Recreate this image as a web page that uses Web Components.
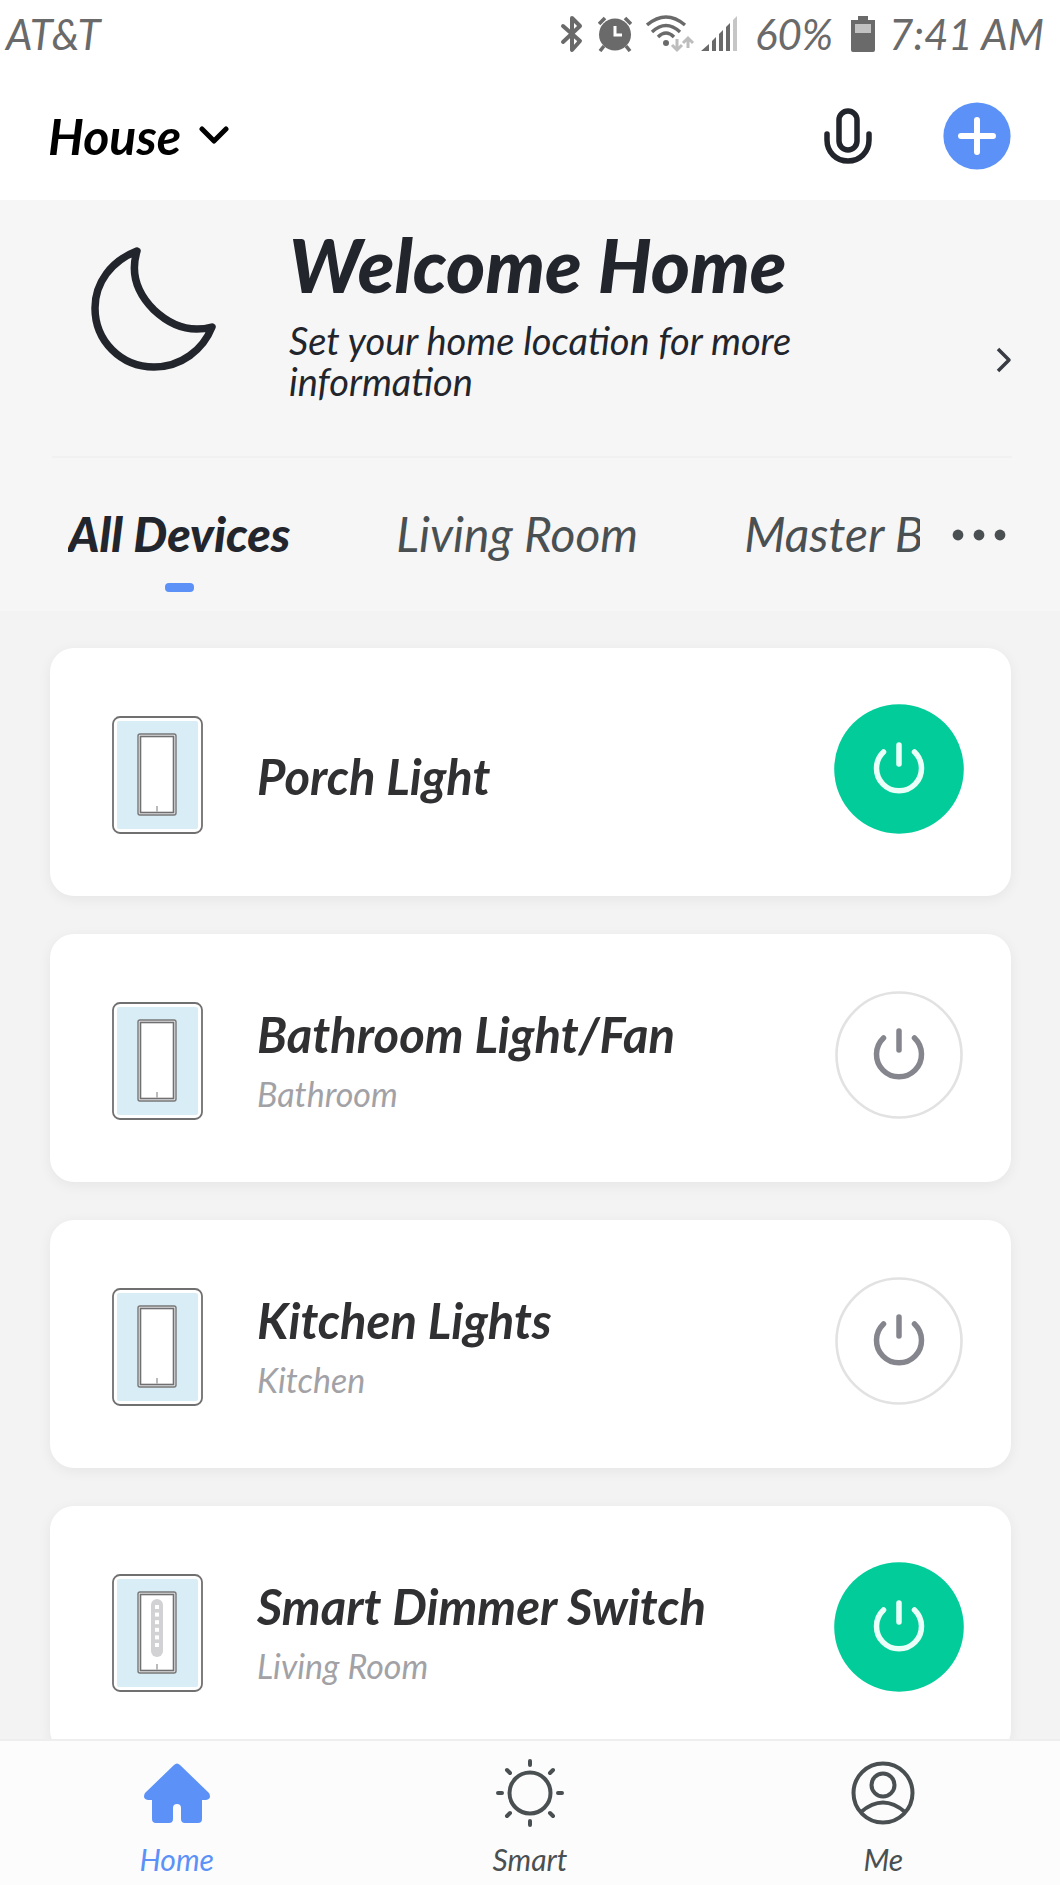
<!DOCTYPE html>
<html lang="en">
<head>
<meta charset="utf-8">
<meta name="viewport" content="width=device-width, initial-scale=1">
<title>House</title>
<style>
  html, body {
    height: 100%;
    margin: 0;
  }
  body {
    font-family: Lato, "Liberation Sans", sans-serif;
    font-style: italic;
    color: #23252d;
    background: #f3f3f3;
    --blue: #5c92f8;
    --ink: #23252d;
    --slate: #4a5052;
  }
</style>
</head>
<body>
<home-app></home-app>

<script>
const RESET = `
  * { box-sizing: border-box; }
  svg { display: block; flex: none; }
  h1, h2, p, ul { margin: 0; padding: 0; font-weight: inherit; }
  button {
    margin: 0;
    padding: 0;
    border: 0;
    background: none;
    font: inherit;
    color: inherit;
    cursor: pointer;
  }
  a { color: inherit; text-decoration: none; }
`;

// Attaches an open shadow root with the shared reset, the element's styles and its markup
function render(el, css, html) {
    el.attachShadow({ mode: 'open' });
    el.shadowRoot.innerHTML = `<style>${RESET}${css}</style>${html}`;
}

class StatusBar extends HTMLElement {
    constructor() {
        super();
        render(this, `
        :host {
          display: flex;
          align-items: center;
          height: 68px;
          padding: 0 16px 0 6px;
          font-size: 42px;
          color: #6a6a6a;
          background: #fff;
        }
        .right, .network {
          display: flex;
          align-items: center;
          gap: 14px;
        }
        .right { margin-left: auto; }
        .network { gap: 6px; }
        ::slotted([slot="level"]) {
          min-width: 86px;
          text-align: center;
        }
        `, `
        <slot></slot>
        <div class="right">
          <svg width="24" height="38" viewBox="0 0 24 38" fill="none" stroke="currentColor" stroke-width="4" stroke-linejoin="round" stroke-linecap="round">
            <path d="M3 11L20 26L12 35V3L20 11L3 27"/>
          </svg>
          <svg width="34" height="36" viewBox="0 0 34 36">
            <circle cx="17" cy="18.500" r="16" fill="currentColor"/>
            <path d="M1 8L7 2M33 8L27 2M6 30L2 35M28 30L32 35" stroke="currentColor" stroke-width="3.600"/>
            <path d="M17 10V19H24" fill="none" stroke="#fff" stroke-width="3"/>
          </svg>
          <div class="network">
            <svg width="49" height="38" viewBox="0 0 49 38">
              <g fill="none" stroke="currentColor" stroke-width="3.400">
                <path d="M1 10Q20 -6 39 10"/>
                <path d="M6 17Q20 4 34 17"/>
                <path d="M12 22Q20 14 28 22"/>
              </g>
              <circle cx="20" cy="28" r="3" fill="currentColor"/>
              <path d="M31 24V34M26 30L31 35L36 30M42 33V23M37 28L42 23L47 28" fill="none" stroke="#bdbdbd" stroke-width="3"/>
            </svg>
            <svg width="36" height="36" viewBox="0 0 36 36" fill="currentColor">
              <path d="M0 35L8 28V35ZM11 25L15 21V35H11ZM18 18L22 14V35H18ZM25 11L29 7V35H25Z"/>
              <path d="M32 4L36 0V35H32Z" fill="#c6c6c6"/>
            </svg>
          </div>
          <slot name="level"></slot>
          <svg width="24" height="36" viewBox="0 0 24 36">
            <path d="M7 0H17V4H24V34Q24 36 22 36H2Q0 36 0 34V4H7Z" fill="currentColor"/>
            <path d="M4 8H20V17H4Z" fill="#c2c2c2"/>
          </svg>
          <slot name="time"></slot>
        </div>`);
    }
}
customElements.define('status-bar', StatusBar);

class HouseHeader extends HTMLElement {
    constructor() {
        super();
        render(this, `
        :host {
          display: flex;
          box-sizing: border-box;
          align-items: center;
          justify-content: space-between;
          height: 132px;
          padding: 4px 49px 0 48px;
          background: #fff;
        }
        .home {
          display: flex;
          align-items: center;
          gap: 18px;
          font-size: 50px;
          line-height: 60px;
          font-weight: 700;
          color: #000;
        }
        .actions {
          display: flex;
          align-items: center;
          gap: 71px;
        }
        `, `
        <button class="home" type="button">
          <slot></slot>
          <svg width="30" height="20" viewBox="0 0 30 20" fill="none" stroke="currentColor" stroke-width="5" stroke-linecap="round" stroke-linejoin="round">
            <path d="M3 3L15 15L27 3"/>
          </svg>
        </button>
        <div class="actions">
          <button type="button" aria-label="Voice control">
            <svg width="48" height="58" viewBox="0 -1 48 58" fill="none" stroke="#23252d" stroke-width="5.500" stroke-linecap="round">
              <rect x="15" y="3" width="18" height="39" rx="9"/>
              <path d="M3 26V32C3 44 12 53 24 53S45 44 45 32V26"/>
            </svg>
          </button>
          <button type="button" aria-label="Add device">
            <svg width="68" height="68" viewBox="0 0 68 68">
              <circle cx="34" cy="34" r="33.600" fill="#5c92f8"/>
              <path d="M34 18V50M18 34H50" stroke="#fff" stroke-width="6" stroke-linecap="round"/>
            </svg>
          </button>
        </div>`);
    }
}
customElements.define('house-header', HouseHeader);

class WelcomeBanner extends HTMLElement {
    constructor() {
        super();
        render(this, `
        :host {
          display: block;
          padding: 0 48px 0 52px;
          background: #f6f6f6;
        }
        a {
          display: flex;
          align-items: center;
          height: 258px;
          padding-left: 39px;
          border-bottom: 2px solid #f1f1f1;
        }
        .moon { margin-bottom: 38px; }
        .text {
          flex: 1;
          padding: 0 72px;
          margin-bottom: 34px;
        }
        h1 {
          font-size: 75px;
          line-height: 88px;
          font-weight: 900;
        }
        p {
          max-width: 560px;
          margin-top: 12px;
          font-size: 38px;
          line-height: 41px;
        }
        .arrow { margin-top: 64px; }
        `, `
        <a href="#location">
          <svg class="moon" width="126" height="126" viewBox="0 0 126 126" fill="none" stroke="#23252d" stroke-width="7.500" stroke-linejoin="round">
            <path d="M46 5C20 15 4 37 4 62C4 95 30 121 63 121C90 121 112 104 121 81C99 87 79 79 63 64C47 48 39 28 46 5Z"/>
          </svg>
          <div class="text">
            <h1><slot></slot></h1>
            <p><slot name="hint"></slot></p>
          </div>
          <svg class="arrow" width="16" height="26" viewBox="0 0 16 26" fill="none" stroke="#3a3c44" stroke-width="3.500" stroke-linejoin="round">
            <path d="M2 2L13 13L2 24"/>
          </svg>
        </a>`);
    }
}
customElements.define('welcome-banner', WelcomeBanner);

class RoomTabs extends HTMLElement {
    constructor() {
        super();
        render(this, `
        :host {
          display: flex;
          height: 153px;
          padding: 0 54px 0 68px;
          background: #f6f6f6;
        }
        .tabs {
          flex: 1;
          display: flex;
          gap: 106px;
          min-width: 0;
          overflow: hidden;
        }
        .more {
          display: flex;
          align-items: center;
          padding-left: 32px;
        }
        `, `
        <div class="tabs" role="tablist"><slot></slot></div>
        <button class="more" type="button" aria-label="More rooms">
          <svg width="54" height="12" viewBox="0 0 54 12" fill="#4a5052">
            <circle cx="6" cy="6" r="5.400"/>
            <circle cx="27" cy="6" r="5.400"/>
            <circle cx="48" cy="6" r="5.400"/>
          </svg>
        </button>`);
    }
}
customElements.define('room-tabs', RoomTabs);

class RoomTab extends HTMLElement {
    constructor() {
        super();
        const active = this.hasAttribute('active');
        render(this, `
        :host {
          display: flex;
          flex: none;
          font-size: 48px;
          color: var(--slate);
        }
        :host([active]) {
          font-weight: 900;
          color: var(--ink);
        }
        button {
          display: flex;
          flex-direction: column;
          align-items: center;
          white-space: nowrap;
          line-height: 56px;
          padding-top: 48px;
        }
        :host([active]) button::after {
          content: "";
          width: 29px;
          height: 9px;
          margin-top: 21px;
          border-radius: 4px;
          background: var(--blue);
        }
        `, `<button type="button" role="tab" aria-selected="${active}"><slot></slot></button>`);
    }
}
customElements.define('room-tab', RoomTab);

class DeviceCard extends HTMLElement {
    constructor() {
        super();
        const on = this.hasAttribute('on');
        const dimmer = this.hasAttribute('dimmer');
        const holes = [0, 1, 2, 3, 4, 5]
            .map((i) => `<rect x="43" y="${37 + i * 7.6}" width="4" height="4" fill="#fff"/>`).join('');
        render(this, `
        :host {
          display: flex;
          align-items: center;
          flex: none;
          height: 248px;
          padding: 0 47px 0 62px;
          border-radius: 24px;
          background: #fff;
          box-shadow: 0 3px 14px rgba(0, 0, 0, 0.06);
        }
        .text {
          flex: 1;
          padding: 8px 48px 0 54px;
        }
        h2 {
          font-size: 49px;
          line-height: 60px;
          font-weight: 700;
          color: #303032;
        }
        ::slotted([slot="room"]) {
          display: block;
          margin-top: 4px;
          font-size: 34px;
          line-height: 52px;
          color: #a2a2a6;
        }
        `, `
        <svg width="91" height="124" viewBox="0 0 91 124">
          <rect x="1" y="7" width="89" height="116" rx="7" fill="#fff" stroke="#707070" stroke-width="1.800"/>
          <rect x="5" y="11" width="81" height="108" rx="2" fill="#d8edf5"/>
          <rect x="26" y="24" width="38" height="81" rx="2" fill="#e9e9eb" stroke="#777" stroke-width="1.400"/>
          <rect x="28.500" y="26.500" width="33" height="76" fill="#fff" stroke="#707070" stroke-width="1.600"/>
          <path d="M45 96V102" stroke="#bbb" stroke-width="2"/>
          ${dimmer ? `<rect x="39" y="31" width="12" height="58" rx="6" fill="#d2d2d4"/>${holes}` : ''}
        </svg>
        <div class="text">
          <h2><slot></slot></h2>
          <slot name="room"></slot>
        </div>
        <button type="button" aria-label="Power" aria-pressed="${on}">
          <svg width="130" height="136" viewBox="0 0 130 136" fill="none">
            ${on ? '<circle cx="65" cy="65" r="64.800" fill="#02cc9a"/>'
                 : '<circle cx="65" cy="65" r="62.500" stroke="#e2e2e2" stroke-width="2.600"/>'}
            <path d="M49.500 48A22.500 22.500 0 1 0 80.500 48M65 41V60" stroke="${on ? '#e9fff8' : '#85858d'}" stroke-width="5.500" stroke-linecap="round"/>
          </svg>
        </button>`);
        const button = this.shadowRoot.querySelector('button');
        button.addEventListener('click', () => {
            this.dispatchEvent(new CustomEvent('power', { bubbles: true, composed: true }));
        });
    }
}
customElements.define('device-card', DeviceCard);

const NAV_ICONS = {
    home: `<path d="M31 4Q34 1 37 4L66 32Q69 38 63 39H59V58Q59 62 55 62H42Q38 62 38 58V47Q38 43 34 43T30 47V58Q30 62 26 62H13Q9 62 9 58V39H5Q-1 38 2 32Z" fill="currentColor"/>`,
    smart: `<g fill="none" stroke="currentColor" stroke-width="4" stroke-linecap="round">
        <circle cx="34" cy="32" r="20.500"/>
        <path d="M34 0V4M34 60V64M2 32H6M62 32H66M11 9L14 12M57 9L54 12M11 55L14 52M57 55L54 52"/></g>`,
    me: `<g fill="none" stroke="currentColor" stroke-width="4">
        <circle cx="34" cy="32" r="29.500"/>
        <circle cx="34" cy="24" r="11.500"/>
        <path d="M12 51Q34 32 56 51"/></g>`,
};

class NavItem extends HTMLElement {
    constructor() {
        super();
        const icon = this.getAttribute('icon');
        render(this, `
        :host {
          flex: 1;
          display: block;
          color: var(--slate);
        }
        :host([active]) { color: var(--blue); }
        a {
          display: flex;
          flex-direction: column;
          align-items: center;
          padding-top: 18px;
          font-size: 30px;
          line-height: 36px;
        }
        svg { margin-bottom: 16px; overflow: visible; }
        `, `<a href="#${icon}"><svg width="68" height="66" viewBox="0 -2 68 66">${NAV_ICONS[icon]}</svg><slot></slot></a>`);
    }
}
customElements.define('nav-item', NavItem);

class HomeApp extends HTMLElement {
    constructor() {
        super();
        render(this, `
        :host {
          display: flex;
          flex-direction: column;
          height: 100vh;
        }
        main {
          flex: 1;
          display: flex;
          flex-direction: column;
          gap: 38px;
          min-height: 0;
          padding: 37px 49px 37px 50px;
          overflow-y: auto;
          scrollbar-width: none;
        }
        status-bar, house-header, welcome-banner, room-tabs { flex: none; }
        nav {
          display: flex;
          flex: none;
          height: 146px;
          border-top: 2px solid #eeeeee;
          background: #fcfcfc;
        }
        `, `
        <status-bar>
          AT&amp;T
          <span slot="level">60%</span>
          <span slot="time">7:41 AM</span>
        </status-bar>
        <house-header>House</house-header>
        <welcome-banner>
          Welcome Home
          <span slot="hint">Set your home location for more information</span>
        </welcome-banner>
        <room-tabs>
          <room-tab active>All Devices</room-tab>
          <room-tab>Living Room</room-tab>
          <room-tab>Master Bedroom</room-tab>
        </room-tabs>
        <main>
          <device-card on>Porch Light</device-card>
          <device-card>Bathroom Light/Fan<span slot="room">Bathroom</span></device-card>
          <device-card>Kitchen Lights<span slot="room">Kitchen</span></device-card>
          <device-card on dimmer>Smart Dimmer Switch<span slot="room">Living Room</span></device-card>
        </main>
        <nav>
          <nav-item icon="home" active>Home</nav-item>
          <nav-item icon="smart">Smart</nav-item>
          <nav-item icon="me">Me</nav-item>
        </nav>`);
    }
}
customElements.define('home-app', HomeApp);
</script>
</body>
</html>
